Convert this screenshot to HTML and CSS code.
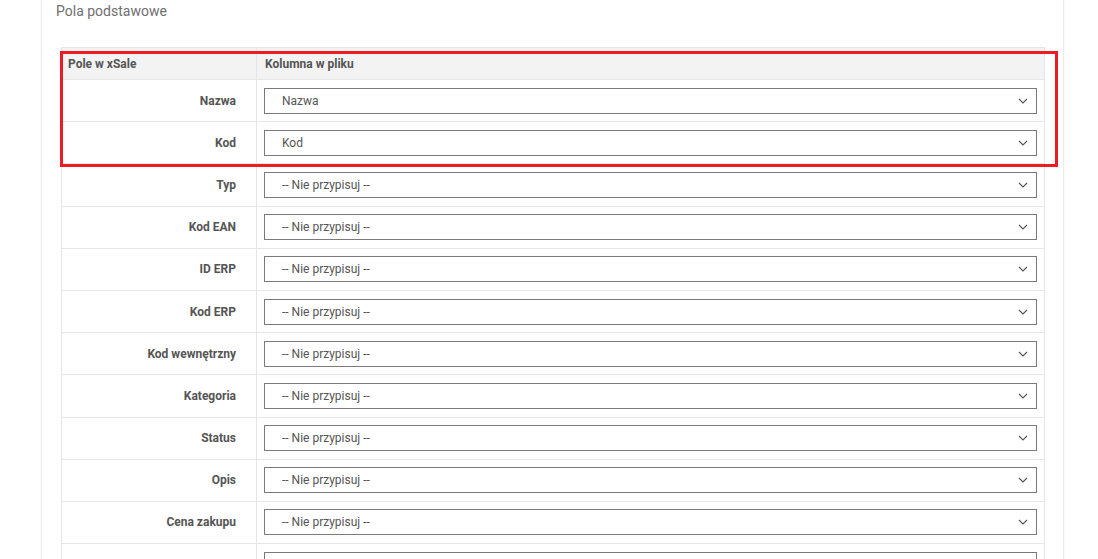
FILE: index.html
```html
<!DOCTYPE html>
<html lang="pl">
<head>
<meta charset="utf-8">
<title>Pola podstawowe</title>
<link rel="stylesheet" href="styles.css">
</head>
<body>
<div class="card">
  <div class="title">Pola podstawowe</div>
  <div class="table-wrap">
    <table class="map">
      <thead>
        <tr><th class="c1">Pole w xSale</th><th class="c2">Kolumna w pliku</th></tr>
      </thead>
      <tbody>
        <tr><td class="lbl">Nazwa</td><td class="sel"><div class="select">Nazwa<svg class="chev" viewBox="0 0 10 6"><path d="M1 1 L5 5 L9 1"/></svg></div></td></tr>
        <tr><td class="lbl">Kod</td><td class="sel"><div class="select">Kod<svg class="chev" viewBox="0 0 10 6"><path d="M1 1 L5 5 L9 1"/></svg></div></td></tr>
        <tr><td class="lbl">Typ</td><td class="sel"><div class="select">-- Nie przypisuj --<svg class="chev" viewBox="0 0 10 6"><path d="M1 1 L5 5 L9 1"/></svg></div></td></tr>
        <tr><td class="lbl">Kod EAN</td><td class="sel"><div class="select">-- Nie przypisuj --<svg class="chev" viewBox="0 0 10 6"><path d="M1 1 L5 5 L9 1"/></svg></div></td></tr>
        <tr><td class="lbl">ID ERP</td><td class="sel"><div class="select">-- Nie przypisuj --<svg class="chev" viewBox="0 0 10 6"><path d="M1 1 L5 5 L9 1"/></svg></div></td></tr>
        <tr><td class="lbl">Kod ERP</td><td class="sel"><div class="select">-- Nie przypisuj --<svg class="chev" viewBox="0 0 10 6"><path d="M1 1 L5 5 L9 1"/></svg></div></td></tr>
        <tr><td class="lbl">Kod wewnętrzny</td><td class="sel"><div class="select">-- Nie przypisuj --<svg class="chev" viewBox="0 0 10 6"><path d="M1 1 L5 5 L9 1"/></svg></div></td></tr>
        <tr><td class="lbl">Kategoria</td><td class="sel"><div class="select">-- Nie przypisuj --<svg class="chev" viewBox="0 0 10 6"><path d="M1 1 L5 5 L9 1"/></svg></div></td></tr>
        <tr><td class="lbl">Status</td><td class="sel"><div class="select">-- Nie przypisuj --<svg class="chev" viewBox="0 0 10 6"><path d="M1 1 L5 5 L9 1"/></svg></div></td></tr>
        <tr><td class="lbl">Opis</td><td class="sel"><div class="select">-- Nie przypisuj --<svg class="chev" viewBox="0 0 10 6"><path d="M1 1 L5 5 L9 1"/></svg></div></td></tr>
        <tr><td class="lbl">Cena zakupu</td><td class="sel"><div class="select">-- Nie przypisuj --<svg class="chev" viewBox="0 0 10 6"><path d="M1 1 L5 5 L9 1"/></svg></div></td></tr>
        <tr><td class="lbl">Cena sprzedaży</td><td class="sel"><div class="select">-- Nie przypisuj --<svg class="chev" viewBox="0 0 10 6"><path d="M1 1 L5 5 L9 1"/></svg></div></td></tr>
      </tbody>
    </table>
    <div class="highlight"></div>
  </div>
</div>
</body>
</html>
```

FILE: styles.css
```css
html, body {
  margin: 0;
  padding: 0;
  background: #ffffff;
  font-family: Roboto, "Liberation Sans", Arial, sans-serif;
  overflow: hidden;
}

.card {
  margin-left: 41px;
  width: 1023px;
  border-left: 1px solid #ebebeb;
  border-right: 1px solid #ebebeb;
  box-shadow: 0 0 3px rgba(0, 0, 0, 0.04);
  padding: 0 20px 0 19px;
  box-sizing: border-box;
  min-height: 600px;
}

.title {
  font-size: 14px;
  line-height: 22px;
  color: #707070;
  margin-left: -5px;
  height: 47px;
}

.table-wrap {
  position: relative;
  width: 984px;
}

.map {
  width: 984px;
  border-collapse: collapse;
  table-layout: fixed;
  font-size: 12px;
  color: #555555;
}

.map th,
.map td {
  border: 1px solid #e6e6e6;
  padding: 0;
}

.map th {
  background: #f3f3f3;
  height: 31px;
  text-align: left;
  font-weight: 700;
  vertical-align: middle;
}

.map th.c1 {
  width: 188px;
  padding-left: 6px;
}

.map th.c2 {
  padding-left: 8px;
}

.map td {
  height: 41.2px;
  vertical-align: middle;
}

.map td.lbl {
  text-align: right;
  font-weight: 700;
  padding-right: 20px;
}

.map td.sel {
  padding: 0 7px;
}

.select {
  height: 26px;
  box-sizing: border-box;
  border: 1px solid #7a7a7a;
  padding-left: 17px;
  padding-right: 8px;
  display: flex;
  align-items: center;
  justify-content: space-between;
  font-size: 12px;
  color: #555555;
}

.chev {
  width: 10px;
  height: 6px;
  fill: none;
  stroke: #555555;
  stroke-width: 1.1;
}

.highlight {
  position: absolute;
  left: -1px;
  top: 4px;
  width: 998px;
  height: 116px;
  box-sizing: border-box;
  border: 3px solid #ec1c24;
  pointer-events: none;
}
```
